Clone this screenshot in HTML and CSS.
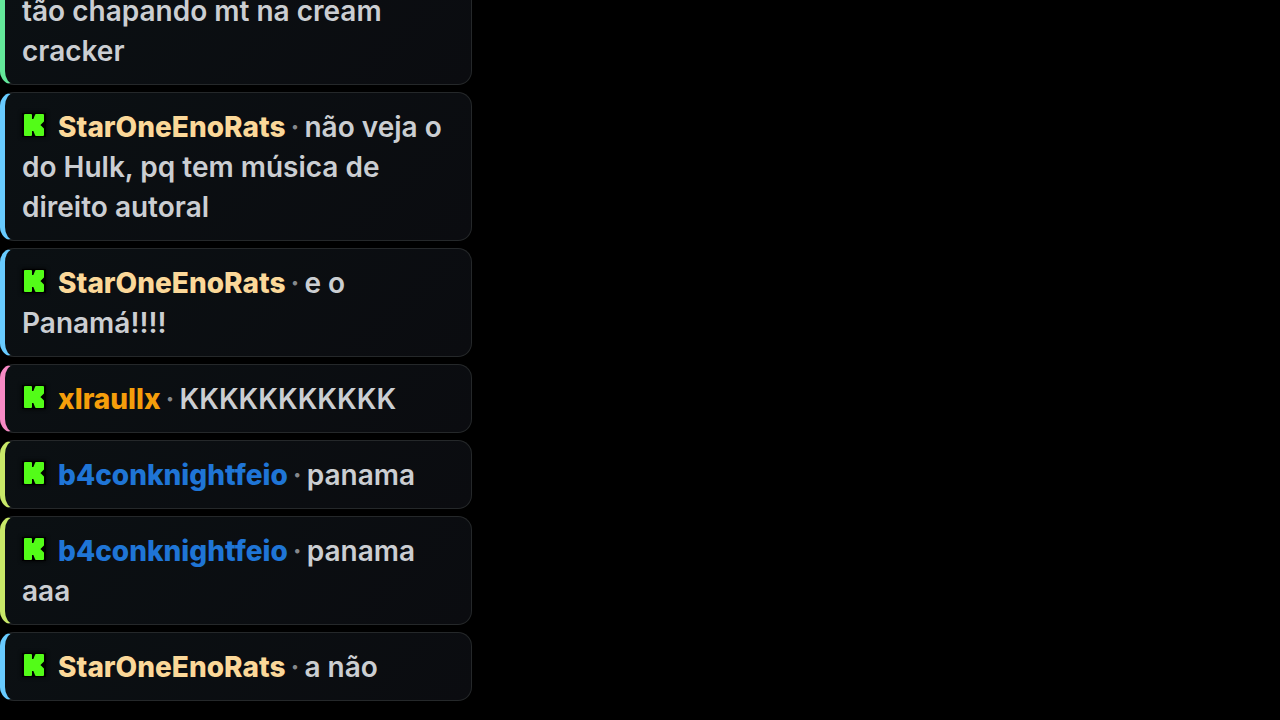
FILE: index.html
```html
<!DOCTYPE html>
<html lang="pt-BR">
<head>
  <meta charset="UTF-8">
  <meta name="viewport" content="width=device-width, initial-scale=1.0">
  <title>Chat</title>
  <link rel="stylesheet" href="styles.css">
</head>
<body>
  <svg class="sprite" aria-hidden="true">
    <symbol id="kick" viewBox="0 0 24 24">
      <rect width="24" height="24" fill="#000"/>
      <path d="M3 2H9V7H12L14 2H21V8L17 12L21 16V22H14L12 17H9V22H3Z" fill="#53fc18" stroke="#53fc18" stroke-width="2" stroke-linejoin="round"/>
    </symbol>
  </svg>

  <main class="chat">
    <div class="message green">
      <span class="text">tão chapando mt na cream cracker</span>
    </div>
    <div class="message blue">
      <svg class="platform"><use href="#kick"/></svg>
      <span class="name sand">StarOneEnoRats</span><span class="dot">·</span><span class="text">não veja o do Hulk, pq tem música de direito autoral</span>
    </div>
    <div class="message blue">
      <svg class="platform"><use href="#kick"/></svg>
      <span class="name sand">StarOneEnoRats</span><span class="dot">·</span><span class="text">e o Panamá!!!!</span>
    </div>
    <div class="message pink">
      <svg class="platform"><use href="#kick"/></svg>
      <span class="name orange">xlraullx</span><span class="dot">·</span><span class="text">KKKKKKKKKKK</span>
    </div>
    <div class="message lime">
      <svg class="platform"><use href="#kick"/></svg>
      <span class="name royal">b4conknightfeio</span><span class="dot">·</span><span class="text">panama</span>
    </div>
    <div class="message lime">
      <svg class="platform"><use href="#kick"/></svg>
      <span class="name royal">b4conknightfeio</span><span class="dot">·</span><span class="text">panama aaa</span>
    </div>
    <div class="message blue">
      <svg class="platform"><use href="#kick"/></svg>
      <span class="name sand">StarOneEnoRats</span><span class="dot">·</span><span class="text">a não</span>
    </div>
  </main>
</body>
</html>
```
FILE: styles.css
```css
* {
  box-sizing: border-box;
}

body {
  margin: 0;
  background: #000;
  color: #cbced2;
  font-family: Inter, "Noto Sans", sans-serif;
  font-size: 28px;
  font-weight: 600;
  line-height: 40px;
}

.sprite {
  display: none;
}

/* newest message stays at the bottom, older ones run off the top */
.chat {
  display: flex;
  flex-direction: column;
  justify-content: flex-end;
  gap: 7px;
  max-width: 472px;
  height: 100vh;
  padding-bottom: 19px;
  overflow: hidden;
}

.message {
  flex-shrink: 0;
  padding: 14px 16px 13px 17px;
  border: 1px solid #25282a;
  border-left-width: 5px;
  border-radius: 14px;
  background: linear-gradient(135deg, #0b1013, #0b0c10);
}

.message.green { border-left-color: #63e89a; }
.message.blue { border-left-color: #68cbff; }
.message.pink { border-left-color: #f78ac5; }
.message.lime { border-left-color: #c8e868; }

.platform {
  width: 24px;
  height: 24px;
  margin-right: 5px;
  vertical-align: 0;
  filter: drop-shadow(0 0 2px #000);
}

.name {
  font-weight: 800;
}

.name.sand { color: #fbd899; }
.name.orange { color: #f59e0b; }
.name.royal { color: #1f75d6; }

.dot {
  margin: 0 5px;
  color: #85888c;
}
```
